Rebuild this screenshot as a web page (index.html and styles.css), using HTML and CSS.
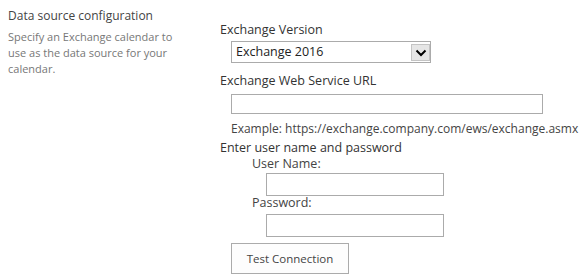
FILE: index.html
```html
<!DOCTYPE html>
<html lang="en">
<head>
  <meta charset="UTF-8" />
  <title>Data source configuration</title>
  <link rel="stylesheet" href="styles.css">
</head>
<body>

  <div class="section">
    <div class="section-info">
      <h3>Data source configuration</h3>
      <p>Specify an Exchange calendar to use as the data source for your calendar.</p>
    </div>

    <div class="section-body">
      <div class="label">Exchange Version</div>
      <div class="select">
        <span class="select-value">Exchange 2016</span>
        <span class="select-arrow">
          <svg width="12" height="8" viewBox="0 0 12 8"><path d="M1.5 1.5 L6 6 L10.5 1.5" fill="none" stroke="#000" stroke-width="2"/></svg>
        </span>
      </div>

      <div class="label label-url">Exchange Web Service URL</div>
      <input type="text" class="input-url" />
      <div class="example">Example: https://exchange.company.com/ews/exchange.asmx</div>

      <div class="label label-cred">Enter user name and password</div>
      <div class="credentials">
        <div class="sub-label">User Name:</div>
        <input type="text" class="input-cred" />
        <div class="sub-label sub-label-pass">Password:</div>
        <input type="password" class="input-cred input-pass" />
      </div>

      <button class="btn-test">Test Connection</button>
    </div>
  </div>

</body>
</html>
```

FILE: styles.css
```css
* {
  box-sizing: border-box;
}

body {
  margin: 0;
  padding: 8px;
  font-family: 'Open Sans', 'Noto Sans', sans-serif;
  font-size: 12.5px;
  line-height: 16px;
  color: #444;
  background: #ffffff;
}

.section {
  display: flex;
}

.section-info {
  width: 212px;
  flex: none;
}

.section-info h3 {
  margin: 0;
  font-size: 12px;
  font-weight: normal;
  color: #444;
}

.section-info p {
  margin: 5px 0 0;
  width: 175px;
  font-size: 11px;
  color: #777;
}

.section-body {
  padding-top: 14px;
  min-width: 0;
}

.label {
  color: #333;
}

.select {
  display: flex;
  width: 200px;
  height: 22px;
  margin: 3px 0 0 11px;
  border: 1px solid #ababab;
  background: #fff;
}

.select-value {
  flex: 1;
  padding: 2px 4px;
  line-height: 16px;
  color: #222;
}

.select-arrow {
  width: 19px;
  margin: 2px 0 1px;
  display: flex;
  align-items: center;
  justify-content: center;
  border: 1px solid #c4c4c4;
  background: #e6e6e6;
}

.label-url {
  margin-top: 10px;
}

input {
  display: block;
  font: inherit;
  border: 1px solid #ababab;
  background: #fff;
  padding: 0 4px;
}

.input-url {
  width: 312px;
  height: 20px;
  margin: 5px 0 0 11px;
}

.example {
  margin: 0 0 0 11px;
  height: 26px;
  line-height: 30px;
  font-size: 12px;
  white-space: nowrap;
}

.credentials {
  padding-left: 32px;
}

.sub-label-pass {
  margin-top: -1px;
}

.input-cred {
  width: 178px;
  height: 23px;
  margin: 1px 0 0 14px;
}

.input-cred.input-pass {
  margin-top: 3px;
}

.btn-test {
  display: block;
  width: 118px;
  height: 31px;
  margin: 6px 0 0 11px;
  font-family: inherit;
  font-size: 11.5px;
  color: #444;
  background: #fdfdfd;
  border: 1px solid #ababab;
  padding: 0;
}
```
